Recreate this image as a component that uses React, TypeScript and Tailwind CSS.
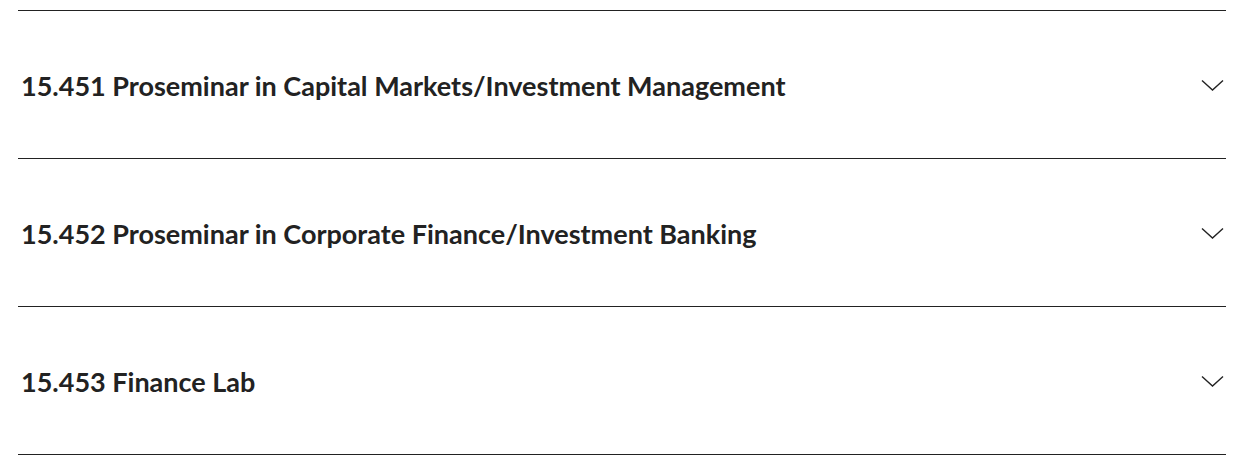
import React from "react";

const items = [
  "15.451 Proseminar in Capital Markets/Investment Management",
  "15.452 Proseminar in Corporate Finance/Investment Banking",
  "15.453 Finance Lab",
];

function Chevron() {
  return (
    <svg width="23" height="12" viewBox="0 0 23 12" fill="none" className="shrink-0">
      <path d="M1 1.5 L11.5 11 L22 1.5" stroke="#222" strokeWidth="1.4" />
    </svg>
  );
}

export default function App() {
  return (
    <div className="w-[1253px] h-[471px] bg-white pt-[10px] pl-[18px]">
      <div className="w-[1208px] border-b border-[#222]">
        {items.map((t) => (
          <div
            key={t}
            className="h-[148px] border-t border-[#222] flex items-center justify-between pl-[3px] pr-[2px]"
          >
            <span
              className="text-[27px] leading-none font-bold text-[#222] pt-[1px]"
              style={{ fontFamily: "Lato, 'Open Sans', sans-serif" }}
            >
              {t}
            </span>
            <Chevron />
          </div>
        ))}
      </div>
    </div>
  );
}
